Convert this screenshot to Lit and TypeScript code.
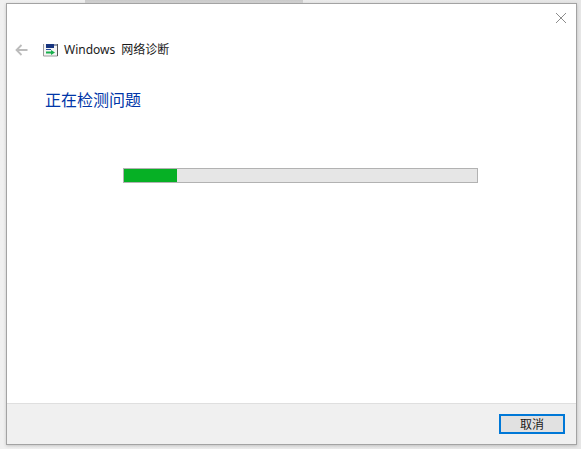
import { LitElement, html, css } from "lit";
import { customElement } from "lit/decorators.js";

@customElement("app-root")
export class AppRoot extends LitElement {
  static styles = css`
    :host {
      display: block;
      width: 581px;
      height: 449px;
      box-sizing: border-box;
      padding: 3px 4px 4px 6px;
      background:
        linear-gradient(#c9c9c9, #d6d6d6) 85px 0 / 218px 3px no-repeat,
        linear-gradient(90deg, #f0f0f0, #e6e6e6) 0 0 / 100% 100% no-repeat;
      font-family: "Noto Sans", "Noto Sans CJK SC", sans-serif;
      color: #1a1a1a;
    }
    .window {
      box-sizing: border-box;
      height: 100%;
      border: 1px solid #a3a3a3;
      border-right-width: 1.5px;
      background: #fff;
      display: flex;
      flex-direction: column;
      box-shadow: 0 1px 3px rgba(0, 0, 0, 0.18);
    }
    .content {
      flex: 1;
      display: flex;
      flex-direction: column;
    }
    .close-row {
      display: flex;
      justify-content: flex-end;
      padding: 8px 9px 0 0;
      height: 12px;
    }
    .close-row svg {
      display: block;
    }
    .nav {
      display: flex;
      align-items: center;
      height: 20px;
      margin-top: 16px;
      padding-left: 8px;
    }
    .back {
      display: block;
      margin-right: 15px;
    }
    .app-icon {
      display: block;
      margin-right: 6px;
    }
    .title {
      font-size: 12px;
      line-height: 20px;
      word-spacing: 3px;
      white-space: nowrap;
    }
    h1 {
      margin: 28px 0 0 38px;
      font-family: "Noto Sans CJK SC", sans-serif;
      font-weight: 400;
      font-size: 16px;
      line-height: 22px;
      color: #0036a8;
    }
    .track {
      box-sizing: border-box;
      width: 355px;
      height: 15px;
      margin: 58px 0 0 116px;
      border: 1px solid #b2b2b2;
      background: #e6e6e6;
    }
    .fill {
      height: 100%;
      background: #06b025;
    }
    .footer {
      box-sizing: border-box;
      height: 41px;
      flex: none;
      border-top: 1px solid #dfdfdf;
      background: #f0f0f0;
      display: flex;
      justify-content: flex-end;
      align-items: flex-start;
      padding: 10px 11px 0 0;
    }
    button {
      box-sizing: border-box;
      width: 66px;
      height: 20px;
      padding: 0;
      border: 2px solid #0078d7;
      background: #e1e1e1;
      font-family: "Noto Sans CJK SC", sans-serif;
      font-size: 12px;
      line-height: 16px;
      color: #1a1a1a;
    }
  `;

  render() {
    const progress = 15;
    return html`
      <div class="window">
        <div class="content">
          <div class="close-row">
            <svg width="12" height="12" viewBox="0 0 12 12" fill="none" stroke="#8c8c8c" stroke-width="1">
              <path d="M1 1l10 10M11 1L1 11" />
            </svg>
          </div>
          <div class="nav">
            <svg class="back" width="13" height="12" viewBox="0 0 13 12" fill="none" stroke="#bcbcbc" stroke-width="1.8">
              <path d="M12.5 6H1.5M6.5 1L1.5 6l5 5" />
            </svg>
            <svg class="app-icon" width="15" height="14" viewBox="0 0 15 14">
              <rect x="0" y="1" width="15" height="12" fill="#f4f4f4" />
              <path d="M0.5 1v12h14" fill="none" stroke="#9a9a9a" stroke-width="1" />
              <path d="M14.5 1v12" fill="none" stroke="#555" stroke-width="1" />
              <rect x="3" y="1" width="8" height="4" fill="#17357f" />
              <rect x="11" y="1" width="3" height="2" fill="#8d97ad" />
              <rect x="3" y="6" width="5" height="1" fill="#2c4f9e" />
              <path d="M3 8.5h5V7l4 2.5L8 12v-1.5H3z" fill="#18b04c" />
            </svg>
            <span class="title">Windows 网络诊断</span>
          </div>
          <h1>正在检测问题</h1>
          <div class="track">
            <div class="fill" style="width:${progress}%"></div>
          </div>
        </div>
        <div class="footer"><button>取消</button></div>
      </div>
    `;
  }
}
